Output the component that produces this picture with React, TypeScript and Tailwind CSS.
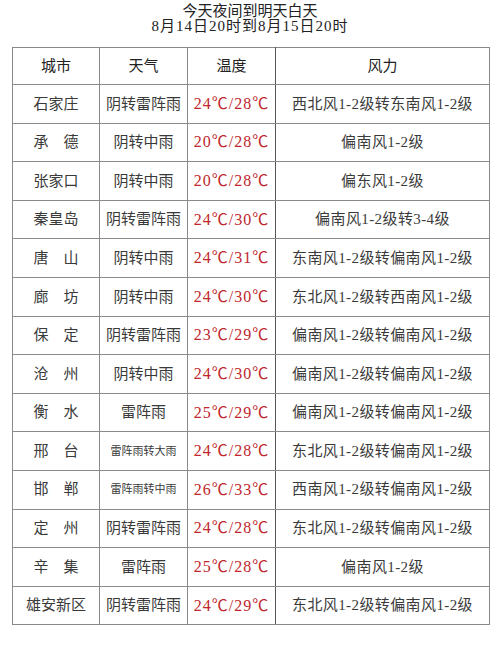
const rows: [string, string, string, string, boolean?][] = [
  ["石家庄", "阴转雷阵雨", "24℃/28℃", "西北风1-2级转东南风1-2级"],
  ["承\u3000德", "阴转中雨", "20℃/28℃", "偏南风1-2级"],
  ["张家口", "阴转中雨", "20℃/28℃", "偏东风1-2级"],
  ["秦皇岛", "阴转雷阵雨", "24℃/30℃", "偏南风1-2级转3-4级"],
  ["唐\u3000山", "阴转中雨", "24℃/31℃", "东南风1-2级转偏南风1-2级"],
  ["廊\u3000坊", "阴转中雨", "24℃/30℃", "东北风1-2级转西南风1-2级"],
  ["保\u3000定", "阴转雷阵雨", "23℃/29℃", "偏南风1-2级转偏南风1-2级"],
  ["沧\u3000州", "阴转中雨", "24℃/30℃", "偏南风1-2级转偏南风1-2级"],
  ["衡\u3000水", "雷阵雨", "25℃/29℃", "偏南风1-2级转偏南风1-2级"],
  ["邢\u3000台", "雷阵雨转大雨", "24℃/28℃", "东北风1-2级转偏南风1-2级", true],
  ["邯\u3000郸", "雷阵雨转中雨", "26℃/33℃", "西南风1-2级转偏南风1-2级", true],
  ["定\u3000州", "阴转雷阵雨", "24℃/28℃", "东北风1-2级转偏南风1-2级"],
  ["辛\u3000集", "雷阵雨", "25℃/28℃", "偏南风1-2级"],
  ["雄安新区", "阴转雷阵雨", "24℃/29℃", "东北风1-2级转偏南风1-2级"],
]

export default function App() {
  return (
    <div
      className="w-[500px] h-[646px] bg-white text-[#3a3a3a] overflow-hidden"
      style={{ fontFamily: '"Liberation Serif", "Noto Sans CJK SC", serif' }}
    >
      <div className="pt-[4px] text-center text-[15px] leading-[15px] text-[#222]">
        <div>今天夜间到明天白天</div>
        <div className="tracking-[1px]">8月14日20时到8月15日20时</div>
      </div>
      <table className="ml-[12px] mt-[13px] w-[478px] border-collapse table-fixed text-[15px]">
        <colgroup>
          <col className="w-[87px]" />
          <col className="w-[88px]" />
          <col className="w-[88px]" />
          <col />
        </colgroup>
        <thead>
          <tr className="h-[37px] text-[#222]">
            <th className="border border-[#8a8a8a] font-normal">城市</th>
            <th className="border border-[#8a8a8a] font-normal">天气</th>
            <th className="border border-[#8a8a8a] border-r-[#555] font-normal">温度</th>
            <th className="border border-[#8a8a8a] font-normal">风力</th>
          </tr>
        </thead>
        <tbody>
          {rows.map(([city, weather, temp, wind, small]) => (
            <tr key={city} className="h-[38.6px]">
              <td className="border border-[#8a8a8a] text-center">{city}</td>
              <td className={`border border-[#8a8a8a] text-center ${small ? "text-[11px]" : ""}`}>{weather}</td>
              <td className="border border-[#8a8a8a] border-r-[#555] text-center text-[16px] tracking-[1px] text-[#c0262c]">{temp}</td>
              <td className="border border-[#8a8a8a] text-center tracking-[0.4px]">{wind}</td>
            </tr>
          ))}
        </tbody>
      </table>
    </div>
  )
}
